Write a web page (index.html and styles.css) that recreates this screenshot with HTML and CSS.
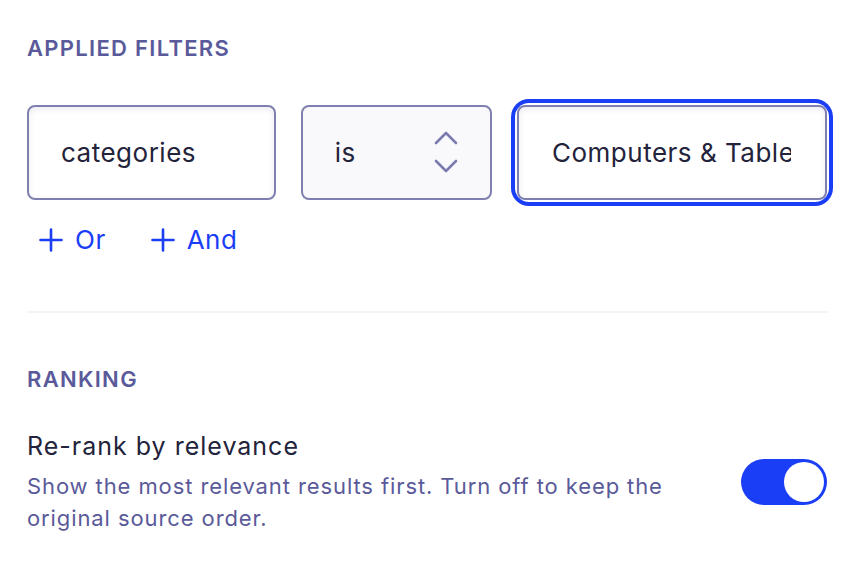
FILE: index.html
```html
<!DOCTYPE html>
<html>
<head>
<meta charset="utf-8">
<link rel="stylesheet" href="styles.css">
</head>
<body>
<div class="panel">
  <section class="section filters">
    <h2 class="heading">Applied Filters</h2>
    <div class="filter-row">
      <div class="field field-attr">categories</div>
      <div class="field field-op">
        <span>is</span>
        <svg class="chev" width="24" height="44" viewBox="0 0 24 44" fill="none" stroke="#7b7bb0" stroke-width="2.6" stroke-linecap="round" stroke-linejoin="round">
          <path d="M2 12 L12 2 L22 12"/>
          <path d="M2 30 L12 40 L22 30"/>
        </svg>
      </div>
      <div class="focus-ring">
        <div class="field field-value"><span class="value-text">Computers &amp; Tablets</span></div>
      </div>
    </div>
    <div class="actions">
      <button class="add-btn"><svg width="24" height="24" viewBox="0 0 24 24" fill="none" stroke="currentColor" stroke-width="2.6" stroke-linecap="round"><path d="M12 1.5 V22.5 M1.5 12 H22.5"/></svg><span>Or</span></button>
      <button class="add-btn"><svg width="24" height="24" viewBox="0 0 24 24" fill="none" stroke="currentColor" stroke-width="2.6" stroke-linecap="round"><path d="M12 1.5 V22.5 M1.5 12 H22.5"/></svg><span>And</span></button>
    </div>
  </section>
  <hr class="divider">
  <section class="section ranking">
    <h2 class="heading">Ranking</h2>
    <div class="setting">
      <div class="setting-text">
        <div class="setting-title">Re-rank by relevance</div>
        <div class="setting-desc">Show the most relevant results first. Turn off to keep the original source order.</div>
      </div>
      <div class="toggle"><div class="knob"></div></div>
    </div>
  </section>
</div>
</body>
</html>
```
FILE: styles.css
```css
* { box-sizing: border-box; }
html, body { margin: 0; padding: 0; background: #ffffff; }
body {
  font-family: Inter, "Noto Sans", sans-serif;
  color: #23233b;
}
.panel {
  width: 800px;
  margin-left: 27px;
  padding-top: 35px;
}
.heading {
  margin: 0;
  font-size: 22px;
  font-weight: 600;
  letter-spacing: 1.3px;
  text-transform: uppercase;
  color: #5a5a9a;
  line-height: 27px;
}
.filter-row {
  display: flex;
  align-items: center;
  gap: 25px;
  margin-top: 43px;
}
.field {
  height: 95px;
  border: 2px solid #8080b0;
  border-radius: 8px;
  background: #ffffff;
  box-shadow: inset 0 2px 6px rgba(90, 90, 150, 0.12);
  display: flex;
  align-items: center;
  padding-left: 32px;
  font-size: 26px;
  letter-spacing: 0.5px;
  color: #23233b;
}
.field-attr { width: 250px; }
.field-op {
  width: 192px;
  background: #f9f9fb;
  box-shadow: none;
  justify-content: space-between;
  padding-right: 32px;
}
.chev { display: block; }
.focus-ring {
  border-radius: 12px;
  box-shadow: 0 0 0 2px #ffffff, 0 0 0 6px #1a3ef5;
}
.field-value {
  width: 310px;
  padding-left: 33px;
  padding-right: 34px;
}
.value-text {
  flex: 1;
  min-width: 0;
  white-space: nowrap;
  overflow: hidden;
  display: block;
}
.actions {
  display: flex;
  gap: 21px;
  margin-top: 16px;
}
.add-btn {
  display: flex;
  align-items: center;
  gap: 12px;
  border: none;
  background: none;
  padding: 8px 12px;
  font-family: inherit;
  font-size: 26px;
  letter-spacing: 0.5px;
  color: #1a3ef5;
}
.add-btn svg { display: block; }
.divider {
  border: none;
  height: 2px;
  background: #f2f2f8;
  margin: 48px 0 0;
}
.ranking { padding-top: 53px; }
.setting {
  display: flex;
  align-items: center;
  justify-content: space-between;
  margin-top: 37px;
}
.setting-title {
  font-size: 25px;
  line-height: 32px;
  letter-spacing: 1px;
  color: #23233b;
}
.setting-desc {
  margin-top: 8px;
  width: 680px;
  font-size: 22px;
  line-height: 32px;
  letter-spacing: 0.9px;
  color: #5a5a9a;
}
.toggle {
  width: 86px;
  height: 46px;
  border-radius: 23px;
  background: #1a3ef5;
  display: flex;
  align-items: center;
  justify-content: flex-end;
  padding-right: 3px;
}
.knob {
  width: 40px;
  height: 40px;
  border-radius: 50%;
  background: #ffffff;
}
```
